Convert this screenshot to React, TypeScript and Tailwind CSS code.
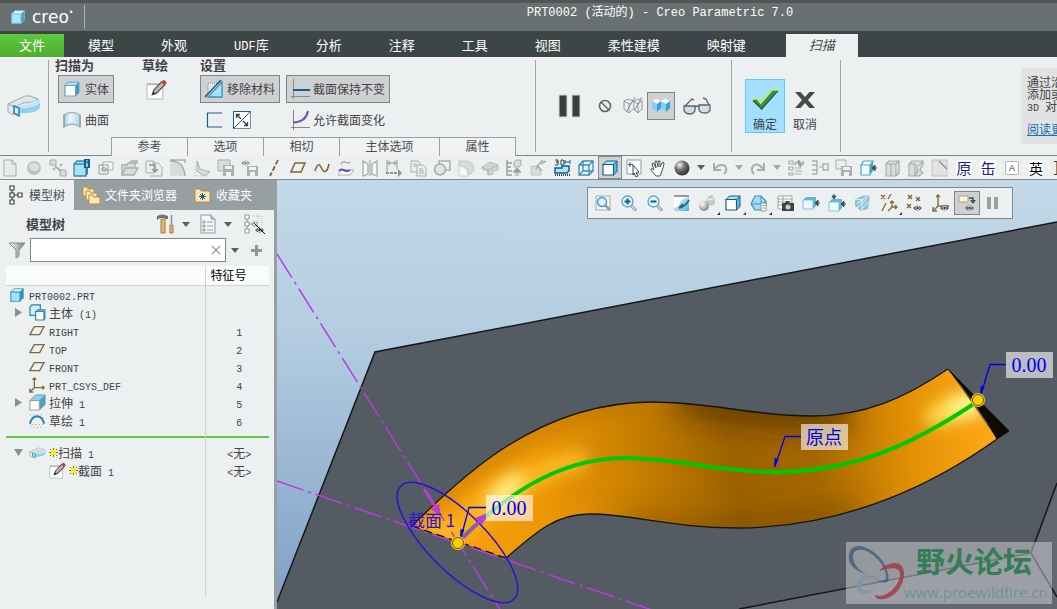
import React from 'react';
import clsx from 'clsx';

const TEAL = '#0f6287';
const SKY = '#a6e3fa';
const DIM = '#a9adaf';
const DIM_FILL = '#d9dbdc';
const BROWN = '#836637';
const INK = '#4a4d4e';

interface SvgProps {
  size?: string;
  box?: string;
  children: React.ReactNode;
}

const Svg: React.FC<SvgProps> = ({ size = 'size-[18px]', box = '0 0 18 18', children }) => (
  <svg className={clsx('shrink-0', size)} viewBox={box} fill="none" aria-hidden="true">
    {children}
  </svg>
);

// Latin runs are set smaller so that two of them take the room of one CJK glyph
const Label: React.FC<{ text: string; latin?: string }> = ({ text, latin = 'text-[10px]' }) => (
  <>
    {text.split(/([\x20-\x7e]+)/).map((part, i) => (
      i % 2
        ? <span key={i} className={clsx("font-['Liberation_Mono',monospace] leading-none whitespace-pre", latin)}>{part}</span>
        : part
    ))}
  </>
);

const Caret = ({ color = '#5c5f60' }: { color?: string }) => (
  <svg className="h-[5px] w-[8px] shrink-0" viewBox="0 0 8 5" aria-hidden="true">
    <path d="M0 0h8L4 5z" fill={color} />
  </svg>
);

const Cube = ({ front = '#fff', top = SKY, side = '#5fb6dc', line = TEAL }) => (
  <>
    <path d="M2 5.5h10.5V16H2z" fill={front} stroke={line} strokeWidth="1.2" />
    <path d="M2 5.5 5.5 2H16l-3.5 3.5z" fill={top} stroke={line} strokeWidth="1" />
    <path d="M16 2v10.5L12.5 16V5.5z" fill={side} stroke={line} strokeWidth="1" />
  </>
);

const Eye = ({ x, y }: { x: number; y: number }) => (
  <g transform={`translate(${x} ${y})`}>
    <path d="M0 3Q4.500-2 9 3 4.500 8 0 3z" fill="#55585a" />
    <circle cx="4.500" cy="3" r="2" fill="#fff" />
    <circle cx="4.500" cy="3" r="1.200" fill="#222" />
  </g>
);

const Lens = ({ sign }: { sign: string }) => (
  <>
    <path d="m10.500 11 5.500 5.500" stroke="#8d9092" strokeWidth="3" />
    <path d="m10.500 11 5 5" stroke="#dcdedf" strokeWidth="1.200" />
    <circle cx="7.500" cy="7.500" r="5.500" fill="#e2f4fb" stroke="#58a4c4" strokeWidth="1.300" />
    <path d={sign} stroke={TEAL} strokeWidth="2" />
  </>
);

const SolidIcon = () => <Svg><Cube top={SKY} side="#3c9cc8" line="#6ba4ba" /></Svg>;

const PartIcon = () => (
  <Svg size="size-[16px]"><Cube front="#a3e1fb" top="#d9f4fe" side="#2f93c2" line="#4397bb" /></Svg>
);

const SketchIcon = ({ size = 'size-[20px]' }: { size?: string }) => (
  <Svg size={size} box="0 0 20 20">
    <path d="M1 5h15v14H1z" fill="#fff" stroke="#b5b8ba" />
    <path d="M1 4h13v2H1z" fill="#b5b8ba" />
    <path d="m6 15 1.500-4.500L15 2.500l3 3-8 8z" fill="#c2bbb3" stroke="#57514b" strokeWidth="1.200" />
    <path d="m14.500 3 2.500-2.500L20 3.500 17.500 6z" fill="#bf4339" />
    <path d="m6 15 1-3 2 2z" fill="#222" />
  </Svg>
);

const SweepIcon = ({ size }: { size: string }) => (
  <Svg size={size} box="0 0 34 22">
    <path d="M1 9 18 1h5l8 3-6 3-9 1-9 4z" fill="#e3e5e6" stroke="#a5a8aa" />
    <path d="M1 9v8l6 3v-8z" fill="#e6e8e9" stroke="#a5a8aa" />
    <path d="M7 11c7-3 9 1 14-2 3-2 8-5 12-4v7c-2 5-7 5-12 6-4 1-7-1-10 2l-4-2z" fill="#92cfe8" />
    <path d="M7 11c7-3 9 1 14-2 3-2 8-5 12-4v3c-4 4-8 4-13 5-4 1-7-1-8 1z" fill="#bfe7f6" />
    <path d="m7 11 5 2v8l-5-3z" fill="#c9edfa" stroke="#3182a4" strokeWidth="1.500" />
  </Svg>
);

const PlaneIcon = () => (
  <Svg size="size-[16px]"><path d="M6 4h11l-5 9H1z" stroke={BROWN} strokeWidth="1.500" /></Svg>
);

const CsysIcon = () => (
  <Svg size="size-[16px]">
    <path d="M6 1v11h11M6 12l-4 4M4 3l2-2 2 2M15 10l2 2-2 2M1 13v4h4" stroke={BROWN} strokeWidth="1.500" />
  </Svg>
);

const BodiesIcon = () => (
  <Svg size="size-[17px]">
    <path d="M1 3 3 1h9v11H1z" fill="#cdeffb" stroke="#3583a6" strokeWidth="1.300" />
    <path d="M7 8h9v9H7z" fill="#fff" stroke="#3583a6" strokeWidth="1.200" />
    <path d="m7 8 2-2h8v9l-1 2V8z" fill="#6fc2e4" stroke="#3583a6" />
  </Svg>
);

const ExtrudeIcon = () => (
  <Svg size="size-[17px]">
    <path d="m1 7 6-6h10v10l-6 6V7z" fill="#8fcfe9" stroke="#7795a2" />
    <path d="m11 7 6-6v10l-6 6z" fill="#4d9fc4" />
    <path d="M1 7h10v10H1z" fill="#fff" stroke="#96999b" />
  </Svg>
);

const ArcIcon = () => (
  <Svg size="size-[16px]">
    <path d="M1 2h16M1 16h16M3 5h14M3 13h14" stroke="#85898b" strokeDasharray="1 3" />
    <path d="M1 12C4 1 14 1 17 12" stroke="#2389b8" strokeWidth="2.200" />
  </Svg>
);

const FolderShape = ({ x, y }: { x: number; y: number }) => (
  <path transform={`translate(${x} ${y})`} d="M0 1h4l1 2h6v7H0z" fill="#fde6b4" stroke="#b98d45" />
);

interface Tool {
  name: string;
  art?: React.ReactNode;
  active?: boolean;
  caret?: boolean;
}

const quickTools: Tool[] = [
  { name: '新建', art: <path d="M3 1h8l4 4v12H3zM11 1v4h4" fill="#e8eaeb" stroke={DIM} /> },
  { name: '外观球', art: <><circle cx="9" cy="9" r="7" fill="#bfc2c4" /><ellipse cx="9" cy="8" rx="5" ry="4" fill="#dcdedf" /></> },
  { name: '装配', art: <><path d="M1 1h6v5H1zM11 11h6v6h-6z" fill={DIM_FILL} stroke={DIM} /><path d="m6 7 6 5M4 9l2 2M11 7l2-2" stroke={DIM} strokeWidth="2" /></> },
  {
    name: '模型信息',
    art: <><path d="M1 5h12v12H1zM1 5l3-3h8v3" fill={SKY} stroke="#3d86a6" strokeWidth="1.300" /><path d="m13 8 2-1v8l-2 2z" fill="#2d88b1" /><path d="M11 0h6v9h-6z" fill={TEAL} /><path d="M14 1v1.500M13 4h1v3m-1 0h2" stroke="#fff" /></>,
  },
  { name: '复制窗口', art: <><path d="M6 3h10v8H6z" fill="#f3f4f4" stroke={DIM} /><path d="M2 6h9v9H2z" stroke="#929699" /><path d="M5 9h4v3H5z" stroke="#929699" /></> },
  { name: '打开', art: <path d="M1 16V6h5l1-2h7v4M1 16 4 9h13l-4 7zM9 3q4-3 7 1m0-3v3h-3" fill={DIM_FILL} stroke={DIM} strokeWidth="1.300" /> },
  { name: '重新生成', art: <><path d="M1 2h8v12H1zM7 4h6l4 4v9H5" fill="#edeeef" stroke={DIM} /><path d="M4 6h6v7m-3-3 3 3 3-3" stroke="#8f9395" strokeWidth="1.500" /></> },
  { name: '倒圆角', art: <><path d="M1 1v16h15q-1-13-15-14z" fill={DIM_FILL} /><path d="M1 2q14 0 15 15M1 1h15v3" stroke={DIM} strokeWidth="1.500" /></> },
  { name: '轮廓', art: <><path d="m4 2 3 8 10 3-6 4-7-5z" fill={DIM_FILL} stroke={DIM} /><path d="M2 7v10h14" stroke={DIM} strokeDasharray="1 2" /></> },
  { name: '保存副本', art: <><path d="M1 1h12v11H1z" fill={DIM_FILL} stroke={DIM} /><path d="M6 6h11v11H6z" fill="#adb0b2" /><path d="M8 7h7v3H8zM9 13h5v4H9z" fill="#f0f1f1" /></> },
  { name: '显示保存', art: <><g opacity=".6"><Eye x={0} y={1} /></g><path d="M6 7h11v10H6z" fill="#adb0b2" /><path d="M8 8h7v3H8zM9 13h5v4H9z" fill="#f0f1f1" /></> },
  { name: '轴', art: <path d="M13 1 5 17" stroke={BROWN} strokeWidth="1.800" strokeDasharray="5 2" /> },
  { name: '平面', art: <path d="M6 4h10l-4 9H2z" stroke={BROWN} strokeWidth="1.500" /> },
  { name: '曲线', art: <path d="M2 12c3-10 5-6 7-2s5 4 7-5" stroke={BROWN} strokeWidth="1.600" /> },
  { name: '草绘曲面', art: <><path d="M4 5c4-6 5 2 9-2" stroke={DIM} strokeWidth="1.500" /><path d="M5 11h12l-4 5H1z" fill="#fff" stroke={DIM} /><path d="M2 12c4-5 5 3 11-1" stroke="#7143a8" strokeWidth="2" /></> },
  { name: '镜像', art: <path d="m2 2 5 3v10l-5 2zM16 2l-5 3v10l5 2zM9 1v16" fill="#f5f6f6" stroke={DIM} strokeWidth="1.300" /> },
  { name: '尺寸', art: <><path d="M2 1v13M12 1v9M3 4h8" stroke={DIM} strokeWidth="1.300" /><path d="m5 1-3 3 3 3zM9 1l3 3-3 3z" fill={DIM} /><path d="M1 14h14" stroke="#909497" strokeWidth="2" strokeDasharray="3 1" /><path d="m13 10 4 4-4 4z" fill="#909497" /></> },
  { name: '复制', art: <><path d="M2 2h7l2 2v9H2z" fill="#edeeef" stroke={DIM} /><path d="M8 6h6l3 3v8H8zM10 10h4M10 12h5M10 14h5M4 5h4M4 7h3" fill="#edeeef" stroke={DIM} /></> },
  { name: '合并', art: <><path d="M6 2h11v9H6z" fill="#edeeef" stroke={DIM} strokeWidth="1.500" /><circle cx="7" cy="10.500" r="5.500" fill="#e1e3e3" stroke={DIM} strokeWidth="1.500" /></> },
  { name: '边倒角', art: <><path d="M2 2h7q8 1 8 9l-5 5q0-8-10-9z" fill={DIM_FILL} stroke="#c2c5c6" /><path d="M2 7v10h9q1-9-9-10z" fill="#f6f7f7" stroke="#cdd0d1" /></> },
  { name: '扫描特征', art: <><path d="M1 8 9 3l8 3v5l-5 1v3l-5 1v-4l-6-2z" fill="#d1d3d4" stroke="#bcbfc1" /><path d="m1 8 6 3 10-5M7 11v5" stroke="#adb0b2" /></> },
  { name: '图层', art: <><path d="M2 1v16M2 4h5M2 8h4M2 12h5M2 16h5" stroke="#969a9c" strokeWidth="1.300" /><path d="m9 3 2-2h5v5l-2 2H9z" fill={DIM_FILL} stroke={DIM} /><path d="m8 13 4-4 4 4zM10 14h4M10 16h4" fill="#9a9ea0" stroke="#9a9ea0" /></> },
  { name: '修剪', art: <><path d="M2 7h7q3 3 3 9H2z" fill={DIM_FILL} stroke="#c2c5c6" /><path d="M7 10C9 5 12 3 14 1M8 6l5 6M12 5l5-3" stroke={DIM} strokeWidth="1.500" /></> },
  {
    name: '3D 尺寸',
    art: <><path d="M2 1h3v2H3h2v3H2M8 1h2l1 1v3l-1 1H8z" stroke="#3f4345" /><path d="M12 3h5M12 1v4M17 1v4" stroke={TEAL} /><path d="M2 9h7V7h7v5l-2 2H2z" fill="#b0e4f8" stroke={TEAL} strokeWidth="1.500" /><path d="M2 16h15" stroke="#3f4345" strokeWidth="2" strokeDasharray="1 1" /></>,
  },
  { name: '线框', art: <path d="M2 6h10v10H2zM6 2h10v10H6zM2 6l4-4M12 6l4-4M12 16l4-4M2 16l4-4" stroke="#388fb3" strokeWidth="1.300" /> },
  { name: '着色', active: true, art: <Cube /> },
  { name: '选择', art: <><path d="M2 1h14v14H2z" fill="#fff" stroke="#929698" /><path d="M5 3v5M3 5.500h5" stroke={TEAL} /><path d="m8 6 6 7-3 .5L13 17l-2 1-2-4-1 2z" fill="#fff" stroke="#3f4345" /></> },
  { name: '平移', art: <path d="M7 17 2 11q0-3 3 0L3 5q1-2 2 0l2 4-1-6q1-3 2 0l1 5V3q1-3 2 0v5l2-4q2-2 2 1l-2 7-2 5z" fill="#fff" stroke="#4a4e50" /> },
  { name: '外观', caret: true, art: <circle cx="9" cy="9" r="7.500" fill="url(#ball)" /> },
  { name: '撤消', caret: true, art: <path d="M3 4v7h7M4 10q4-6 10-3 3 4-1 8" stroke={DIM} strokeWidth="2" /> },
  { name: '重做', caret: true, art: <path d="M15 4v7H8M14 10Q9 3 4 7q-3 4 1 8" stroke={DIM} strokeWidth="2" /> },
  { name: '更新列表', art: <><path d="M2 2h4v3H2zM2 8h4v3H2zM2 14h4v2H2zM8 9h6M8 12h7M8 15h6" stroke={DIM} strokeWidth="1.200" /><path d="M8 6q0-3 4-3m-1-2 2 2-2 2M16 2q1 4-3 4m1-2-2 2 2 2" stroke="#999d9f" strokeWidth="1.400" /></> },
  { name: '关系', art: <><path d="M1 2h5v4H1M12 5h5v6h-5zM6 6v9M1 15h5M1 11h5" stroke={DIM} strokeWidth="1.400" /><path d="M8 8h3" stroke={DIM} /></> },
  { name: '全部保存', art: <><path d="M1 1h10v9H1z" fill="#ebecec" stroke={DIM} /><path d="M6 7h11v10H6z" fill="#adb0b2" /><path d="M8 8h7v3H8zM9 13h5v4H9z" fill="#f0f1f1" /></> },
  { name: '偏移面', art: <><path d="M2 6h9v10H2zM2 6l3-4h9l-3 4z" fill="#f2fbff" stroke="#55a5c8" strokeWidth="1.200" /><path d="m11 6 3-4v10l-3 4z" fill="#4ca4cd" /><path d="m13 9 3-3v6zM15 9h3" fill={INK} stroke={INK} /></> },
  { name: '拉伸面', art: <path d="M3 5h5v12H3zM8 5h5v12H8zM3 5l3-3h10l-3 3M16 2v12l-3 3" fill={DIM_FILL} stroke={DIM} strokeWidth="1.200" /> },
  { name: '移除面', art: <path d="M2 5h6v12H2zM2 5l3-3h11l-3 4q-5 1-2 5l-3 6M16 2v4l-3 5 3 3-4 3H8" fill={DIM_FILL} stroke={DIM} strokeWidth="1.200" /> },
  { name: '拔模', art: <><path d="M1 1h15v16H1z" fill="#e0e2e3" stroke="#bfc2c3" /><path d="m8 2 8 8" stroke="#8f9395" strokeWidth="1.500" /></> },
];

const viewTools: Tool[] = [
  { name: '重新调整', art: <><path d="M2 2h14v14H2z" fill="#f6f7f7" stroke="#a6aaac" /><path d="m11 11 5 5" stroke="#9a9ea0" strokeWidth="2.500" /><circle cx="8" cy="8" r="4.500" fill="#dff3fb" stroke="#459abd" strokeWidth="1.500" /></> },
  { name: '放大', art: <Lens sign="M4.500 7.500h6M7.500 4.500v6" /> },
  { name: '缩小', art: <Lens sign="M4.500 7.500h6" /> },
  { name: '重画', art: <><path d="M2 2h15v15H2z" fill="url(#wash)" /><path d="M2 2h15" stroke="#96999b" strokeWidth="2" /><path d="M2 3h14q-8 2-9 9l-5 2z" fill="#fff" /><path d="M7 14q6-1 10-8M7 14l4-4" stroke="#226e8c" strokeWidth="1.800" /></> },
  { name: '渲染选项', caret: true, art: <><path d="m8 4 5-3 4 2v7l-4 2-5-3z" fill="#c7cacc" /><path d="m8 4 5 2 4-3" stroke="#fff" /><circle cx="6" cy="12" r="5" fill="url(#pearl)" /></> },
  { name: '显示样式', caret: true, art: <Cube /> },
  { name: '已保存方向', caret: true, art: <><path d="m1 10 4-8h6l5 5v5l-6 4H5z" fill="#a6daee" stroke="#3f93b5" strokeWidth="1.200" /><path d="M1 10h10V2M11 10l5-3" stroke="#3f93b5" /><path d="M11 9h5v8h-5z" fill="#fff" stroke="#929698" /><path d="M12.500 11.500h2M12.500 14h2" stroke="#777" /></> },
  { name: '视图管理器', art: <><path d="M2 2h14v13H2zM2 5h14M7 2v13M2 8h14M2 11h14" fill="#fff" stroke="#a0a4a6" /><path d="M6 9h3l1-2h3l1 2h4v8H6z" fill="#3f4345" /><circle cx="12" cy="13" r="2.500" fill="#c9cccd" /></> },
  { name: '透视图', art: <><path d="M1 6h10v9H1z" fill="#ecf9ff" stroke="#83c4dd" /><path d="m1 6 3-3h10l-3 3zM14 3v9l-3 3V6z" fill="#64b6d8" /><path d="m13 9 3-3v6zM15 9h3" fill={INK} stroke={INK} /></> },
  { name: '剖面', art: <><path d="M1 8h10v9H1z" fill="#ecf9ff" stroke="#83c4dd" /><path d="m1 8 3-3h10l-3 3zM14 5v9l-3 3V8z" fill="#64b6d8" /><path d="m13 10 3-3v6zM15 10h3M4 2l2 3 2-3zM6 0v3" fill={INK} stroke={INK} /></> },
  { name: '截面方向', art: <><path d="m1 5 7-3 8-1-2 14-7 2-6-5z" fill="#8fc3d8" /><path d="m1 5 7 1v11M8 6l8-5M3 10l9-7M3 14 13 5M8 15l6-7" stroke="#e3f3f9" /></> },
  { name: '基准显示过滤器', caret: true, art: <path d="m1 1 4 4m0-4L1 5M11 0 8 5M6 9l-4 8M12 7v6h5M12 13l-4 4M15 11l2 2-2 2M10 9l2-2 2 2" stroke={BROWN} strokeWidth="1.300" /> },
  { name: '点显示', art: <><path d="m2 1 4 4m0-4L2 5M10 3l4 4m0-4-4 4M1 10l4 4m0-4-4 4" stroke={BROWN} strokeWidth="1.500" /><Eye x={7} y={11} /></> },
  { name: '坐标系显示', art: <><path d="M6 1v11h11M6 12l-4 4M4 3l2-2 2 2M1 13v4h4" stroke={BROWN} strokeWidth="1.400" /><Eye x={8} y={11} /></> },
  { name: '注释显示', active: true, art: <><path d="M1 2h9v6H1z" fill="#fff5d6" stroke="#a6a08f" /><path d="M11 4h4v4" stroke={INK} strokeWidth="1.500" /><path d="M12 6h6l-3 4z" fill={INK} /><Eye x={7} y={11} /></> },
  { name: '暂停', art: <path d="M3 3h4v12H3zM10 3h4v12h-4z" fill="#9b9fa1" /> },
];

const menuTabs = ['模型', '外观', 'UDF库', '分析', '注释', '工具', '视图', '柔性建模', '映射键'];

const panelTabs = [
  { name: '参考', width: 'w-[77px]' },
  { name: '选项', width: 'w-[77px]' },
  { name: '相切', width: 'w-[77px]' },
  { name: '主体选项', width: 'w-[101px]' },
  { name: '属性', width: 'w-[77px]' },
];

interface TreeNode {
  name: string;
  icon: React.ReactNode;
  id?: string;
  indent?: string;
  toggle?: 'open' | 'closed';
  fresh?: boolean;
}

const features: TreeNode[] = [
  { name: 'PRT0002.PRT', icon: <PartIcon />, indent: 'pl-[3px] gap-1' },
  { name: '主体 (1)', icon: <BodiesIcon />, toggle: 'closed' },
  { name: 'RIGHT', icon: <PlaneIcon />, id: '1' },
  { name: 'TOP', icon: <PlaneIcon />, id: '2' },
  { name: 'FRONT', icon: <PlaneIcon />, id: '3' },
  { name: 'PRT_CSYS_DEF', icon: <CsysIcon />, id: '4' },
  { name: '拉伸 1', icon: <ExtrudeIcon />, id: '5', toggle: 'closed' },
  { name: '草绘 1', icon: <ArcIcon />, id: '6' },
];

const pending: TreeNode[] = [
  { name: '扫描 1', icon: <SweepIcon size="h-[12px] w-[17px]" />, id: '<无>', toggle: 'open', fresh: true },
  { name: '截面 1', icon: <SketchIcon size="size-[17px]" />, id: '<无>', indent: 'pl-[43px] gap-[3px]', fresh: true },
];

const TreeRow: React.FC<{ node: TreeNode }> = ({ node }) => (
  <tr className="h-[18px]">
    <td className="border-r border-[#cfd2d3] p-0">
      <div className={clsx('flex h-[18px] items-center', node.indent ?? (node.toggle ? 'gap-[3px] pl-2' : 'gap-1 pl-[23px]'))}>
        {node.toggle && (
          <button aria-label={node.toggle === 'open' ? '折叠' : '展开'} className="mr-1 flex w-2 justify-center">
            <svg className="size-[9px] shrink-0" viewBox="0 0 9 9" aria-hidden="true">
              <path d={node.toggle === 'open' ? 'M0 1h9L4.500 8z' : 'M1 0v9l7-4.500z'} fill="#8b8f91" />
            </svg>
          </button>
        )}
        {node.icon}
        <span className="flex items-center whitespace-pre">
          {node.fresh && (
            <svg className="size-[9px] shrink-0" viewBox="0 0 9 9" aria-hidden="true">
              <path d="M4.500 0v9M0 4.500h9M1 1l7 7M8 1 1 8" stroke="#6d6a2a" strokeWidth="1" />
              <path d="M2 2h5v5H2z" fill="#ffee00" />
            </svg>
          )}
          <span><Label text={node.name} /></span>
        </span>
      </div>
    </td>
    <td className="p-0 pl-1 text-center"><Label text={node.id ?? ''} /></td>
  </tr>
);

const TitleBar = () => (
  <header className="flex h-[34px] shrink-0 items-center border-t-[3px] border-b-[3px] border-t-[#545454] border-b-[#3d4646] bg-[#687071] text-white">
    <div className="flex h-full w-[85px] shrink-0 items-center pl-[10px]">
      <Svg size="size-[16px]"><Cube front="#a9e6ff" top="#d9f5ff" side="#3d9cc9" line="#7fc3de" /></Svg>
      <span className="ml-[6px] font-['DejaVu_Sans',sans-serif] text-[17px] leading-5">creo</span>
      <span className="mb-2 font-['DejaVu_Sans',sans-serif] text-[8px] leading-3">•</span>
      <span className="ml-auto h-6 w-px bg-[#a9aeae]" />
    </div>
    <h1 className="mb-2 flex-1 pl-[262px] text-center font-['Liberation_Mono','Noto_Sans_CJK_SC',monospace] text-[12px] whitespace-nowrap">
      PRT0002 (活动的) - Creo Parametric 7.0
    </h1>
    {/* keeps the title centred over the viewport rather than over the window */}
    <div className="w-[84px] shrink-0" />
  </header>
);

const MenuBar = () => (
  <nav className="flex h-[23px] shrink-0 gap-px bg-[#3d4646] text-[13px] text-white">
    <button className="w-16 bg-gradient-to-b from-[#5dca3b] to-[#50ac32] pb-0.5">文件</button>
    {menuTabs.map((tab) => (
      <button key={tab} className="px-[23px] pb-0.5 whitespace-nowrap"><Label text={tab} latin="text-[12px]" /></button>
    ))}
    <button className="ml-4 bg-[#edf0f1] px-[23px] pb-0.5 whitespace-nowrap text-[#3d4646] italic">扫描</button>
  </nav>
);

const Divider = () => <div className="my-[3px] w-px shrink-0 bg-[#a3a7a9]" />;

const Ribbon = () => (
  <section className="flex h-[99px] shrink-0 border-b border-[#7c8587] bg-[#edf0f1]">
    <div className="flex w-12 shrink-0 items-center justify-center">
      <SweepIcon size="h-[22px] w-[34px]" />
    </div>
    <Divider />

    <div className="flex w-[486px] shrink-0 flex-col">
      <div className="flex flex-1 pl-[6px]">
        <div className="w-[87px]">
          <h2 className="h-[18px] text-[13px] leading-4 font-bold">扫描为</h2>
          <button className="ml-[3px] flex h-7 w-14 items-center gap-1 border border-[#808485] bg-[#cfd0d2] pl-1">
            <SolidIcon />实体
          </button>
          <button className="ml-[3px] flex h-[34px] w-14 items-center gap-1 pl-[5px]">
            <Svg>
              <path d="M1 4q8-5 16 0v12q-8-6-16 0z" fill="url(#sky)" stroke="#aab0b2" strokeWidth="1.300" />
              <path d="M1 4v12M17 4v12" stroke="#8b9092" />
            </Svg>
            曲面
          </button>
        </div>
        <div className="w-[58px]">
          <h2 className="h-[18px] text-[13px] leading-4 font-bold">草绘</h2>
          <button aria-label="草绘" className="ml-1 flex h-7 items-center"><SketchIcon size="size-[21px]" /></button>
        </div>
        <div>
          <h2 className="h-[18px] text-[13px] leading-4 font-bold">设置</h2>
          <div className="flex gap-[6px]">
            <button className="flex h-7 w-20 items-center gap-[3px] border border-[#808485] bg-[#cfd0d2] pl-[3px] whitespace-nowrap">
              <Svg size="size-[20px]" box="0 0 20 20">
                <path d="M4 4h14v14H4z" fill="#e2e4e5" stroke="#85898b" strokeDasharray="1 1" />
                <path d="M18 3v15H4z" fill={SKY} stroke="#4493b2" strokeWidth="1.300" />
                <path d="M1 18 17 1" stroke={TEAL} strokeWidth="1.600" />
              </Svg>
              移除材料
            </button>
            <button className="flex h-7 w-[104px] items-center gap-[3px] border border-[#808485] bg-[#cfd0d2] pl-[3px] whitespace-nowrap">
              <Svg size="size-[20px]" box="0 0 20 20">
                <path d="M3.500 0v20M1 17.500h19" stroke="#85898b" />
                <path d="M3 11h17" stroke={TEAL} strokeWidth="2" />
              </Svg>
              截面保持不变
            </button>
          </div>
          <div className="flex h-[34px] items-center">
            <button aria-label="薄板" className="ml-1">
              <Svg size="size-[20px]" box="0 0 20 20">
                <path d="M18 3H3.500v14H18" stroke={TEAL} strokeWidth="1.200" />
              </Svg>
            </button>
            <button aria-label="反向" className="ml-2">
              <Svg size="size-[20px]" box="0 0 20 20">
                <path d="M1.500 1.500h17v17h-17z" fill="#fff" stroke="#85898b" />
                <path d="M1.500 18.500v-17h17z" stroke={TEAL} />
                <path d="m5 5 4 4M15 15l-4-4M4.500 8V4.500H8M15.500 12v3.500H12" stroke="#3c3f40" strokeWidth="1.300" />
              </Svg>
            </button>
            <button className="ml-[38px] flex items-center gap-[3px] whitespace-nowrap">
              <Svg size="size-[20px]" box="0 0 20 20">
                <path d="M3.500 0v20M1 17.500h19" stroke="#85898b" />
                <path d="M3 12.500Q16 12 18 1" stroke="#7b4db0" strokeWidth="2" />
              </Svg>
              允许截面变化
            </button>
          </div>
        </div>
      </div>
      <div className="ml-[62px] flex h-5 text-[#4a4d4e]">
        {panelTabs.map((tab) => (
          <button key={tab.name} className={clsx('-mr-px border border-b-0 border-[#9ca0a1] bg-[#f0f2f3] pb-0.5', tab.width)}>
            {tab.name}
          </button>
        ))}
      </div>
    </div>
    <Divider />

    <div className="flex w-[195px] shrink-0 items-center pl-[22px]">
      <button aria-label="暂停">
        <Svg size="size-[24px]" box="0 0 24 24"><path d="M1 1h8v22H1zM14 1h8v22h-8z" fill="#3b3d3e" stroke="#d5d8d9" /></Svg>
      </button>
      <button aria-label="无预览" className="ml-4">
        <Svg size="size-[14px]" box="0 0 14 14"><circle cx="7" cy="7" r="5.500" stroke="#626567" strokeWidth="1.600" /><path d="m3 3 8 8" stroke="#626567" strokeWidth="1.600" /></Svg>
      </button>
      <button aria-label="分离" className="ml-[11px]">
        <Svg size="size-[20px]" box="0 0 20 20">
          <path d="m1 5 5 3 5-3 4 3 4-3M1 5v8l5 4V8M11 5v8l4 4V8M19 5v8l-4 4M6 17l4-4M1 5l4-2 6 2 4-2 4 2M3 16 12 1M11 15l8-14" stroke="#8b8f91" strokeWidth=".9" />
        </Svg>
      </button>
      <button aria-label="连接" className="ml-1 flex size-7 items-center justify-center border border-[#808485] bg-[#cfd0d2]">
        <Svg size="size-[20px]" box="0 0 20 20">
          <path d="m1 5 4-2 5 2 4-2 5 2-4 3-5-2-4 2z" fill="#fff" />
          <path d="m1 5 5 3v8l-5-4zM10 5l5 3v8l-5-4z" fill="#7fd0f2" />
          <path d="m6 8 4-3v7l-4 4zM15 8l4-3v7l-4 4z" fill="#2fa5da" />
        </Svg>
      </button>
      <button aria-label="预览" className="ml-2">
        <Svg size="h-[18px] w-[28px]" box="0 0 28 18">
          <path d="M1 9h11v4q-1 4-5 4-5 0-6-4zM16 8h11v5q-1 3-5 3-5 0-6-3z" fill="#cfdfe8" stroke="#5f6365" strokeWidth="1.300" />
          <path d="M12 10q2-2 4 0M2 9l7-7 2 1M26 8l-3-6-3-1" stroke="#5f6365" strokeWidth="1.400" />
        </Svg>
      </button>
    </div>
    <Divider />

    <div className="flex w-[108px] shrink-0 items-center pl-[13px]">
      <button className="flex h-[54px] w-10 flex-col items-center justify-between border border-[#69c5f2] bg-[#a3dfff] pt-[9px]">
        <Svg size="h-[21px] w-[29px]" box="0 0 30 22">
          <path d="m1 11 5-1 4 5L22 1h6L11 21z" fill="#2f9156" />
          <path d="m1 11 5-1 4 5L22 1h6" stroke="#dfea26" strokeWidth="1.500" />
          <path d="M28 2 11 21l-9-9" stroke="#1f5a3a" strokeWidth="1.300" />
        </Svg>
        <span className="leading-4">确定</span>
      </button>
      <button className="flex h-[54px] w-10 flex-col items-center justify-between pt-3 pb-px">
        <Svg size="h-[18px] w-[20px]" box="-1 0 20 18"><path d="M-1 1h5.500L9 6l4.500-5H19l-7 8 7 8h-5.500L9 12l-4.500 5H-1l7-8z" fill="#47494a" /></Svg>
        <span className="leading-4">取消</span>
      </button>
    </div>
    <Divider />

    <aside className="my-[11px] ml-auto w-9 shrink-0 overflow-hidden bg-[#e0e2e3] pt-2 pl-[6px] leading-3 whitespace-nowrap">
      <p>通过沿</p>
      <p>添加或移</p>
      <p className="h-3"><Label text="3D 对象" /></p>
      <a href="#help" className="mt-[11px] block text-[#1a6fae] underline">阅读更多</a>
    </aside>
  </section>
);

const Toolbar = () => (
  <div className="flex h-6 shrink-0 items-stretch overflow-hidden border-b border-[#858c8e] bg-[#edf0f1]">
    <div className="-ml-0.5 flex">
      {quickTools.map((tool) => (
        <React.Fragment key={tool.name}>
          <button
            aria-label={tool.name}
            className={clsx('flex w-6 shrink-0 items-center justify-center', tool.active && 'border border-[#858c8e] bg-[#cfd0d2]')}
          >
            <Svg>{tool.art}</Svg>
          </button>
          {tool.caret && (
            <button aria-label={`${tool.name}选项`} className="flex w-[14px] shrink-0 items-center justify-center">
              <Caret color={tool.name === '外观' ? '#5c5f60' : '#a4a8aa'} />
            </button>
          )}
        </React.Fragment>
      ))}
      <button className="flex w-6 shrink-0 items-center justify-center text-[15px] text-[#1a1a8c]"><span className="bg-white leading-4">原</span></button>
      <button className="flex w-6 shrink-0 items-center justify-center text-[15px] text-[#1a1a8c]"><span className="bg-white leading-4">缶</span></button>
      <button className="flex w-6 shrink-0 items-center justify-center"><span className="size-[14px] rounded-xs border border-[#b1b5b7] bg-white font-['Liberation_Sans',sans-serif] text-[9px] leading-3">A</span></button>
      <button className="flex w-6 shrink-0 items-center justify-center text-[14px] text-black"><span className="bg-white leading-4">英</span></button>
      <button className="flex w-6 shrink-0 items-center pl-1 font-['Liberation_Mono',monospace] text-[14px]">]</button>
    </div>
  </div>
);

const ModelTree = () => (
  <aside className="flex w-[277px] shrink-0 flex-col border-r-[3px] border-[#989fa1] bg-[#edf0f1]">
    <div className="-mr-[3px] flex h-[30px] shrink-0 bg-[#989fa1] text-white">
      <button className="flex w-[74px] items-center gap-[6px] bg-[#edf0f1] pl-2 text-[#4a4d4e]">
        <Svg size="h-[20px] w-[15px]" box="0 0 15 20">
          <path d="M2 1h4v4H2zM2 8h4v4H2zM2 15h4v4H2zM10 8h4v4h-4zM4 5v3M4 12v3M6 10h4" fill="#fff" stroke="#3d4142" strokeWidth="1.200" />
        </Svg>
        模型树
      </button>
      <button className="flex items-center gap-1 pl-2">
        <Svg size="size-[19px]" box="0 0 19 19"><FolderShape x={1} y={0} /><FolderShape x={4} y={4} /><FolderShape x={7} y={8} /></Svg>
        文件夹浏览器
      </button>
      <button className="flex items-center gap-[5px] pl-[17px]">
        <Svg size="size-[17px]" box="0 0 17 17">
          <path d="M1 2h5l1 2h9v11H1z" fill="#fbe6bb" stroke="#b98d45" />
          <path d="M8.500 6v7M5 9.500h7M6 7l5 5M11 7l-5 5" stroke={TEAL} />
        </Svg>
        收藏夹
      </button>
    </div>

    <div className="flex h-7 shrink-0 items-center pl-[26px]">
      <h2 className="text-[13px] font-bold">模型树</h2>
      <button aria-label="设置" className="ml-[91px]">
        <Svg size="size-[20px]" box="0 0 20 20">
          <path d="M1 2q5-3 11 0v3H9V4H4L1 6z" fill="#6f7476" />
          <path d="M5 5h4v14H5z" fill="#e0b672" stroke="#a37d42" />
          <path d="M15.500 1v9" stroke="#8b8f91" strokeWidth="1.500" />
          <path d="M14 11h3v8h-3z" fill="#e0b672" stroke="#a37d42" />
        </Svg>
      </button>
      <button aria-label="设置选项" className="ml-[6px]"><Caret /></button>
      <button aria-label="显示" className="ml-[9px]">
        <Svg size="size-[20px]" box="0 0 20 20">
          <path d="M2 1h10l4 4v14H2z" fill="#f4f9fb" stroke="#8b9799" />
          <path d="M12 1v4h4" fill="#b4dcea" stroke="#8b9799" />
          <path d="M4 7h2v2H4zM4 11h2v2H4zM4 15h2v2H4zM8 8h6M8 12h6M8 16h6" stroke="#7b8082" strokeWidth=".8" />
        </Svg>
      </button>
      <button aria-label="显示选项" className="ml-[5px]"><Caret /></button>
      <button aria-label="树过滤器" className="ml-3">
        <Svg size="size-[21px]" box="0 0 21 21">
          <path d="M1 1h4v4H1zM1 8h4v4H1zM1 15h4v4H1zM9 8h4v4H9zM3 5v3M3 12v3M5 10h4" fill="#fff" stroke="#909496" />
          <path d="M8 2h10v8M14 2v8" stroke="#b5b8ba" strokeDasharray="1 1" />
          <Eye x={11} y={13} />
          <path d="m10 9 11 11" stroke="#111" />
        </Svg>
      </button>
    </div>

    <div className="flex h-6 shrink-0 items-center pl-2">
      <Svg size="size-[18px]">
        <path d="M1 2h16l-6 7v6l-3 2V9z" fill="url(#funnel)" stroke="#85898b" />
      </Svg>
      <div className="ml-1 flex h-6 w-[196px] items-center border border-[#808789] bg-white">
        <input aria-label="搜索模型树" className="h-full min-w-0 flex-1 px-1 outline-none" />
        <button aria-label="清除" className="mr-1">
          <Svg size="size-[10px]" box="0 0 10 10"><path d="m1 1 8 8M9 1 1 9" stroke="#979b9d" strokeWidth="1.300" /></Svg>
        </button>
      </div>
      <button aria-label="搜索选项" className="ml-[5px]"><Caret /></button>
      <button aria-label="添加" className="ml-3">
        <Svg size="size-[11px]" box="0 0 11 11"><path d="M5.500 0v11M0 5.500h11" stroke="#929698" strokeWidth="3" /></Svg>
      </button>
    </div>

    <div className="mt-1 mr-[5px] mb-3 ml-[6px] min-h-0 flex-1">
      <table className="h-full w-full border-collapse">
        <thead>
          <tr className="h-[19px] bg-[#fafbfb] text-black">
            <th className="border-r border-b border-[#cfd2d3] p-0"><span className="sr-only">名称</span></th>
            <th className="w-16 border-b border-[#cfd2d3] p-0 pl-[5px] text-left font-normal">特征号</th>
          </tr>
        </thead>
        <tbody>
          {features.map((node) => <TreeRow key={node.name} node={node} />)}
          <tr className="h-[14px]">
            <td className="border-r border-[#cfd2d3] p-0"><div className="h-0.5 bg-[#62c744]" /></td>
            <td className="p-0"><div className="h-0.5 bg-[#62c744]" /></td>
          </tr>
          {pending.map((node) => <TreeRow key={node.name} node={node} />)}
          <tr>
            <td className="border-r border-[#cfd2d3]" />
            <td />
          </tr>
        </tbody>
      </table>
    </div>
  </aside>
);

const TUBE = 'M412 526C434 504 468 472 501 450 548 419 600 402 652 402 712 402 752 416 812 416 865 416 905 398 948 369L997 439C940 480 850 528 737 528 672 528 632 514 590 514 557 514 538 530 506 558Z';
const TRAJECTORY = 'M457 543C500 500 555 458 625 458 675 458 720 472 775 472 850 472 910 447 978 401';

const Callout: React.FC<{ x: number; y: number; text: string; cjk?: boolean }> = ({ x, y, text, cjk }) => (
  <>
    <rect x={x} y={y} width="47" height="26" fill="#fff" fillOpacity=".6" />
    <text
      x={x + 23}
      y={y + 20}
      textAnchor="middle"
      fill="#0000e8"
      className={cjk ? "font-['Noto_Sans_CJK_SC',sans-serif] text-[18px]" : "font-['Liberation_Serif',serif] text-[20px]"}
    >
      {text}
    </text>
  </>
);

const Marker: React.FC<{ x: number; y: number }> = ({ x, y }) => (
  <>
    <circle cx={x} cy={y} r="7" fill="#ffcc00" />
    <circle cx={x} cy={y} r="5.500" fill="#ffcc00" stroke="#5e5436" strokeWidth="1" />
  </>
);

const Scene = () => (
  <svg className="block h-full w-full" viewBox="277 180 780 429" preserveAspectRatio="xMinYMin slice" fill="none">
    <defs>
      <linearGradient id="air" x1="0" y1="0" x2="0" y2="1">
        <stop offset="0" stopColor="#c3d9e9" />
        <stop offset=".35" stopColor="#b4cde1" />
        <stop offset="1" stopColor="#7f9fc6" />
      </linearGradient>
      <linearGradient id="brass" gradientUnits="userSpaceOnUse" x1="412" y1="500" x2="985" y2="430">
        <stop offset="0" stopColor="#f9a20e" />
        <stop offset=".22" stopColor="#ee9807" />
        <stop offset=".38" stopColor="#cb8100" />
        <stop offset=".56" stopColor="#9c6200" />
        <stop offset=".7" stopColor="#a56800" />
        <stop offset=".87" stopColor="#e39104" />
        <stop offset="1" stopColor="#fca615" />
      </linearGradient>
      <filter id="soft" filterUnits="userSpaceOnUse" x="200" y="200" width="900" height="600"><feGaussianBlur stdDeviation="15" /></filter>
      <filter id="glow" filterUnits="userSpaceOnUse" x="0" y="-100" width="1400" height="1400"><feGaussianBlur stdDeviation="8" /></filter>
      <clipPath id="tube"><path d={TUBE} /></clipPath>
    </defs>

    <rect x="277" y="180" width="780" height="429" fill="url(#air)" />
    <path d="M277 602 375 352 1057 222V609H277z" fill="#555b63" />
    <path d="M739 609 1031 553 1057 483V609z" fill="#626973" />
    <path d="M277 602 375 352 1057 222M739 609 1031 553 1057 483M1031 553l26 44" stroke="#15171a" strokeWidth="1.500" />

    <path d={TUBE} fill="url(#brass)" />
    <g clipPath="url(#tube)">
      <path d="M680 398C720 402 760 414 850 414" stroke="#3c2400" strokeOpacity=".75" strokeWidth="26" filter="url(#soft)" />
      <path d="M620 524Q740 542 860 510" stroke="#5e3a00" strokeOpacity=".55" strokeWidth="20" filter="url(#soft)" />
      <path d="M420 518C470 470 560 405 640 404" stroke="#b87200" strokeOpacity=".7" strokeWidth="12" filter="url(#glow)" />
      <path d="M470 520Q510 478 585 458" stroke="#ffc22b" strokeOpacity=".85" strokeWidth="20" filter="url(#glow)" />
      <ellipse cx="506" cy="490" rx="22" ry="9" fill="#fff78e" filter="url(#glow)" transform="rotate(-40 506 490)" />
      <ellipse cx="450" cy="532" rx="24" ry="12" fill="#ffc52b" fillOpacity=".7" filter="url(#glow)" />
      <ellipse cx="955" cy="409" rx="32" ry="12" fill="#ffe45c" filter="url(#glow)" transform="rotate(-20 955 409)" />
      <ellipse cx="966" cy="406" rx="14" ry="8" fill="#ffffb0" filter="url(#glow)" />
    </g>
    <path d="M412 526C434 504 468 472 501 450 548 419 600 402 652 402 712 402 752 416 812 416 865 416 905 398 948 369M997 439C940 480 850 528 737 528 672 528 632 514 590 514 557 514 538 530 506 558" stroke="#15140f" strokeWidth="1.300" />
    <path d="m412 526 94 32" stroke="#15140f" strokeWidth="1.300" strokeDasharray="8 5" />
    <path d="m948 369 61 62-12 8q-18-34-49-70z" fill="#0e0b02" stroke="#0e0b02" />

    <path d="m277 254 224 357" stroke="#b93ce0" strokeWidth="1.500" strokeDasharray="28 5 3 5" />
    <path d="m277 481 378 130" stroke="#b93ce0" strokeWidth="1.500" strokeDasharray="28 5 3 5" />
    <path d={TRAJECTORY} stroke="#00c800" strokeWidth="4" />
    <ellipse cx="457.500" cy="542.500" rx="80" ry="29" transform="rotate(45 457.500 542.500)" stroke="#2a10d8" strokeWidth="1.500" />

    <path d="m424 489 11 17M458 543l22-22" stroke="#b93ce0" strokeWidth="3" />
    <path d="m441 517-10-8 8-5zM488 513l-6 12-7-7z" fill="#b93ce0" />
    <text x="408" y="527" fill="#2a10d8" className="font-['Noto_Sans_CJK_SC',sans-serif] text-[17px]">截面 1</text>

    <path d="M486 507.500h-17l-8 30M1006 364.500h-16l-9 30M801 436.500h-16l-10 30" stroke="#0000e8" strokeWidth="1.300" />
    <path d="m460 539 .5-10 4 1zM980 396l.5-10 4 1zM774 468l.5-10 4 1z" fill="#0000e8" />
    <Callout x={486} y={495} text="0.00" />
    <Callout x={1006} y={352} text="0.00" />
    <Callout x={801} y={424} text="原点" cjk />
    <Marker x={458} y={543} />
    <Marker x={978} y={400} />

    <rect x="846" y="542" width="206" height="62" fill="#d5d7da" fillOpacity=".5" />
    <g fill="#405d78" fillOpacity=".8" fillRule="evenodd">
      <path d="M849 560c-2-18 14-17 26-7 11 9 15 22 13 28-3 3-8 1-13-2-15-7-25-11-26-19zm4-2c1 8 9 16 20 20 6 3 12 4 13 0 1-7-5-17-13-23-10-8-21-7-20 3z" />
      <path d="M857 590c-4-12 10-19 22-12-10-2-20 3-17 10 2 4 8 3 14 1-5 5-17 7-19 1z" fill="#7f93a5" />
    </g>
    <path d="M879 571c9-10 25-12 25 3 0 14-13 27-25 25-3 0-4-2-4-4 11 4 23-8 25-19 1-10-9-9-21-5z" fill="#a2303b" fillOpacity=".75" />
    <text x="916" y="573" fill="#26794f" fillOpacity=".9" className="font-['Noto_Sans_CJK_SC',sans-serif] text-[29px] font-bold">野火论坛</text>
    <text x="904" y="598" fill="#6e9397" className="font-['Open_Sans',sans-serif] text-[15px]">www.proewildfire.cn</text>
  </svg>
);

const Viewport = () => (
  <main className="relative min-w-0 flex-1 overflow-hidden">
    <Scene />
    <div className="absolute top-[7px] right-11 flex h-8 items-center border border-[#808789] bg-[#edf0f1] pr-[6px] pl-0.5">
      {viewTools.map((tool) => (
        <button
          key={tool.name}
          aria-label={tool.name}
          className={clsx('relative flex h-6 w-[26px] items-center justify-center', tool.active && 'border border-[#808485] bg-[#cfd0d2]')}
        >
          <Svg>{tool.art}</Svg>
          {tool.caret && (
            <svg className="absolute right-0 bottom-0 size-[3px]" viewBox="0 0 3 3" aria-hidden="true">
              <path d="M3 0v3H0z" fill="#333" />
            </svg>
          )}
        </button>
      ))}
    </div>
  </main>
);

export default function App() {
  return (
    <div className="flex h-screen flex-col overflow-hidden bg-[#edf0f1] font-['Noto_Sans_CJK_SC',sans-serif] text-[12px] leading-4 text-[#3f4345]">
      <svg className="absolute size-0" aria-hidden="true">
        <defs>
          <radialGradient id="ball" cx=".35" cy=".3" r=".8">
            <stop offset="0" stopColor="#f4f4f4" />
            <stop offset=".4" stopColor="#777" />
            <stop offset="1" stopColor="#222" />
          </radialGradient>
          <radialGradient id="pearl" cx=".35" cy=".3" r=".8">
            <stop offset="0" stopColor="#fff" />
            <stop offset="1" stopColor="#75797b" />
          </radialGradient>
          <linearGradient id="sky" x1="0" y1="0" x2="1" y2="0">
            <stop offset="0" stopColor="#8ed4ef" />
            <stop offset=".4" stopColor="#eefaff" />
            <stop offset="1" stopColor="#9edbf2" />
          </linearGradient>
          <linearGradient id="wash" x1="0" y1="0" x2="1" y2="1">
            <stop offset="0" stopColor="#fff" />
            <stop offset="1" stopColor="#4fb4dc" />
          </linearGradient>
          <linearGradient id="funnel" x1="0" y1="0" x2="1" y2="0">
            <stop offset="0" stopColor="#fff" />
            <stop offset="1" stopColor="#777" />
          </linearGradient>
        </defs>
      </svg>
      <TitleBar />
      <MenuBar />
      <Ribbon />
      <Toolbar />
      <div className="flex min-h-0 flex-1">
        <ModelTree />
        <Viewport />
      </div>
    </div>
  );
}
